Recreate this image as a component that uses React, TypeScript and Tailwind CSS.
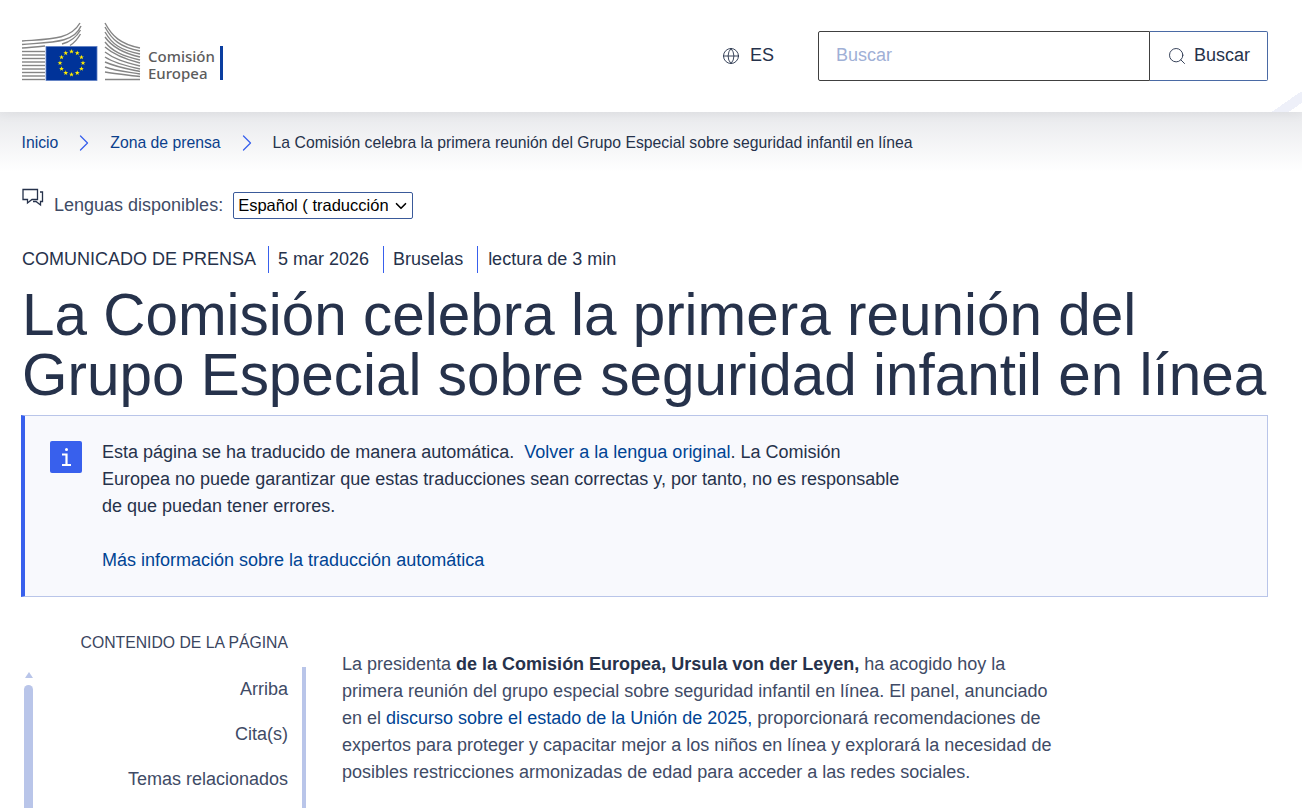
import React from "react";
import { ChevronDown, ChevronRight, Globe, Search } from "lucide-react";

const stars = Array.from({ length: 12 }, (_, i) => {
  const angle = (i * Math.PI) / 6;
  return { x: 71.5 + 11.5 * Math.sin(angle), y: 63 - 11.5 * Math.cos(angle) };
});

const starPoints = (cx: number, cy: number) => {
  const points: string[] = [];
  for (let i = 0; i < 10; i++) {
    const r = i % 2 === 0 ? 2.6 : 1.05;
    const a = (i * Math.PI) / 5;
    points.push(`${(cx + r * Math.sin(a)).toFixed(2)},${(cy - r * Math.cos(a)).toFixed(2)}`);
  }
  return points.join(" ");
};

const Logo = () => (
  <div className="flex items-start">
    <svg width="125" height="62" viewBox="21 22 125 62" className="shrink-0" fill="none">
      {/* left wing */}
      <g stroke="#858585" strokeWidth="1.4">
        <path d="M22 41 C50 39 70 40 80 23" />
        <path d="M22 44.500 C52 42 74 43 81 26" />
        <path d="M22 48 C30 47.500 40 46.500 45 46" />
        <path d="M22 51.500 H45" />
        <path d="M22 55 H45" />
        <path d="M22 58.500 H45" />
        <path d="M22 62 H45" />
        <path d="M22 65.500 H45" />
        <path d="M22 69 H45" />
        <path d="M22 72.500 H45" />
        <path d="M22 76 H45" />
        <path d="M22 79.500 H45" />
        <path d="M62 44 C70 42 76 38 80.500 30" />
        <path d="M70 45.500 C74 43 77 40 80.500 34" />
      </g>
      {/* right wing */}
      <g stroke="#858585" strokeWidth="1.4">
        <path d="M105 23 C112 36 120 44 140 48" />
        <path d="M105 27 C112 40 120 47 140 51" />
        <path d="M105 32 C112 44 120 50 140 54" />
        <path d="M105 37 C112 47 122 53 140 57" />
        <path d="M105 42 C112 51 122 56 140 60" />
        <path d="M105 47 C114 55 124 59 140 63" />
        <path d="M105 52 C114 59 124 62 140 66" />
        <path d="M105 57 C114 63 126 66 140 69" />
        <path d="M105 62 C116 67 128 69 140 71.500" />
        <path d="M105 67 C116 71 128 72 140 74" />
        <path d="M105 72 C116 74 128 75 140 76.500" />
        <path d="M105 79.500 H140" />
      </g>
      <rect x="46" y="46.500" width="51" height="34" fill="#003399" stroke="#5f7fc4" strokeWidth="0.8" />
      {stars.map((s, i) => (
        <polygon key={i} points={starPoints(s.x, s.y)} fill="#ffed00" />
      ))}
    </svg>
    <div className="ml-[2px] mt-[26px] font-['Noto_Sans',sans-serif] text-[15px] font-medium leading-[17px] text-[#5c5c5c]">
      Comisión
      <br />
      Europea
    </div>
    <div className="ml-[5px] mt-[24px] h-[34px] w-[3px] bg-[#0a3ea0]" />
  </div>
);

const Header = () => (
  <header className="relative z-10 flex h-[112px] items-center justify-between overflow-hidden bg-white pl-[21px] pr-[34px] shadow-[0_1px_12px_rgba(0,0,0,0.06)]">
    <div className="-mt-[7px]">
      <Logo />
    </div>
    <div className="flex items-center text-[18px]">
      <Globe size={18} strokeWidth={1.2} className="mr-[10px] text-[#26324b]" />
      <span className="mr-[44px] -mt-[2px] text-[#26324b]">ES</span>
      <div className="mb-[1px] flex h-[50px] w-[450px]">
        <div className="flex w-[332px] items-center rounded-l-[2px] border border-[#404040] pl-[17px] text-[#9fb0d6]">
          Buscar
        </div>
        <button className="flex flex-1 items-center justify-center gap-[7px] rounded-r-[2px] border border-l-0 border-[#4a6aa5] text-[#26324b]">
          <Search size={20} strokeWidth={1.1} />
          Buscar
        </button>
      </div>
    </div>
    <div className="absolute bottom-0 right-0 h-[20px] w-[32px] bg-[linear-gradient(145deg,transparent_50%,#eef0f9_50%,#eef0f9_78%,transparent_78%)]" />
  </header>
);

const Breadcrumb = () => (
  <nav className="flex h-[60px] items-center bg-gradient-to-b from-[#e8e9ec] to-white pl-[21.500px] pt-[2px] text-[15.750px]">
    <a className="text-[#0b3f8c]">Inicio</a>
    <ChevronRight size={28} strokeWidth={1.1} className="mx-[12px] text-[#3860ed]" />
    <a className="text-[#0b3f8c]">Zona de prensa</a>
    <ChevronRight size={28} strokeWidth={1.1} className="mx-[12px] text-[#3860ed]" />
    <span className="text-[#26324b]">La Comisión celebra la primera reunión del Grupo Especial sobre seguridad infantil en línea</span>
  </nav>
);

const LanguageRow = () => (
  <div className="mt-[20px] flex h-[27px] items-center text-[18px] text-[#404b66]">
    <svg width="22" height="20" viewBox="0 0 22 20" fill="none" stroke="#26324b" strokeWidth="1.3" className="-mt-[16px] shrink-0">
      <path d="M1 1.500 H15.500 V11.500 H10 L5.500 15 V11.500 H1 Z" />
      <path d="M18 4 H20.500 V13.500 H18.500 V17 L14 13.500 H11" />
    </svg>
    <span className="ml-[10px]">Lenguas disponibles:</span>
    <div className="relative ml-[10px] h-[27px] w-[180px]">
      <select className="h-[27px] w-[180px] appearance-none rounded-[2px] border border-[#3a5a9a] bg-white pl-[4px] pr-[24px] text-[16.500px] text-black">
        <option>Español ( traducción automática )</option>
      </select>
      <ChevronDown size={18} strokeWidth={2.2} className="pointer-events-none absolute right-[3px] top-[5px] text-black" />
    </div>
  </div>
);

const Meta = () => (
  <div className="mt-[30px] flex h-[20px] items-center text-[18px] text-[#26324b]">
    <span className="pr-[12px]">COMUNICADO DE PRENSA</span>
    <span className="border-l border-[#3860ed] pl-[9px] pr-[10px]">5 mar 2026</span>
    <span className="ml-[4px] border-l border-[#3860ed] pl-[9px] pr-[10px]">Bruselas</span>
    <span className="ml-[4px] border-l border-[#3860ed] pl-[10px]">lectura de 3 min</span>
  </div>
);

const InfoBox = () => (
  <div className="mt-[10px] flex h-[182px] w-[1247px] border border-l-4 border-[#b9c5e9] border-l-[#3860ed] bg-[#f8f9fd] pl-[25px] pt-[25px]">
    <svg width="32" height="32" viewBox="0 0 32 32" className="shrink-0">
      <rect width="32" height="32" rx="2" fill="#3860ed" />
      <circle cx="16.500" cy="8.500" r="1.500" fill="#fff" />
      <path d="M12 13.500 H16.500 V24 M12 24 H21" fill="none" stroke="#fff" strokeWidth="2.200" />
    </svg>
    <div className="ml-[20px] -mt-[2px] w-[800px] text-[18px] leading-[27px] text-[#26324b]">
      <p>
        Esta página se ha traducido de manera automática.&nbsp; <a className="text-[#004494]">Volver a la lengua original</a>. La Comisión
        Europea no puede garantizar que estas traducciones sean correctas y, por tanto, no es responsable de que puedan tener errores.
      </p>
      <p className="mt-[27px] text-[#004494]">Más información sobre la traducción automática</p>
    </div>
  </div>
);

const Toc = () => (
  <aside className="flex w-[285px] shrink-0 flex-col">
    <div className="pr-[18px] text-right text-[15.750px] leading-[20px] text-[#3a4560]">CONTENIDO DE LA PÁGINA</div>
    <div className="mt-[14px] flex h-[200px]">
      <div className="ml-[3px] flex w-[9px] shrink-0 flex-col items-center pt-[5px]">
        <div className="h-0 w-0 border-x-[4px] border-b-[6px] border-x-transparent border-b-[#b9c5e9]" />
        <div className="mt-[7px] w-[9px] flex-1 rounded-t-full bg-[#b9c5e9]" />
      </div>
      <ul className="flex-1 border-r-4 border-[#b9c5e9] pr-[14px] pt-[11px] text-right text-[18px] leading-[22px] text-[#404b66]">
        <li>Arriba</li>
        <li className="mt-[23px]">Cita(s)</li>
        <li className="mt-[23px]">Temas relacionados</li>
      </ul>
    </div>
  </aside>
);

export default function App() {
  return (
    <div className="h-[808px] overflow-hidden bg-white font-['Liberation_Sans',Arial,sans-serif]">
      <Header />
      <Breadcrumb />
      <main className="pl-[21px]">
        <div className="pl-[1px]">
          <LanguageRow />
          <Meta />
          <h1 className="mt-[16px] text-[58.450px] leading-[60px] font-normal text-[#26324b]">
            La Comisión celebra la primera reunión del Grupo Especial sobre seguridad infantil en línea
          </h1>
        </div>
        <InfoBox />
        <div className="mt-[36px] flex">
          <Toc />
          <div className="ml-[36px] mt-[18px] w-[712px] text-[18px] leading-[27px] text-[#404b66]">
            La presidenta <strong className="font-bold text-[#26324b]">de la Comisión Europea, Ursula von der Leyen,</strong> ha acogido hoy la
            <br />
            primera reunión del grupo especial sobre seguridad infantil en línea. El panel, anunciado en el{" "}
            <a className="text-[#004494]">discurso sobre el estado de la Unión de 2025,</a> proporcionará recomendaciones de expertos para proteger y
            capacitar mejor a los niños en línea y explorará la necesidad de posibles restricciones armonizadas de edad para acceder a las redes sociales.
          </div>
        </div>
      </main>
    </div>
  );
}
